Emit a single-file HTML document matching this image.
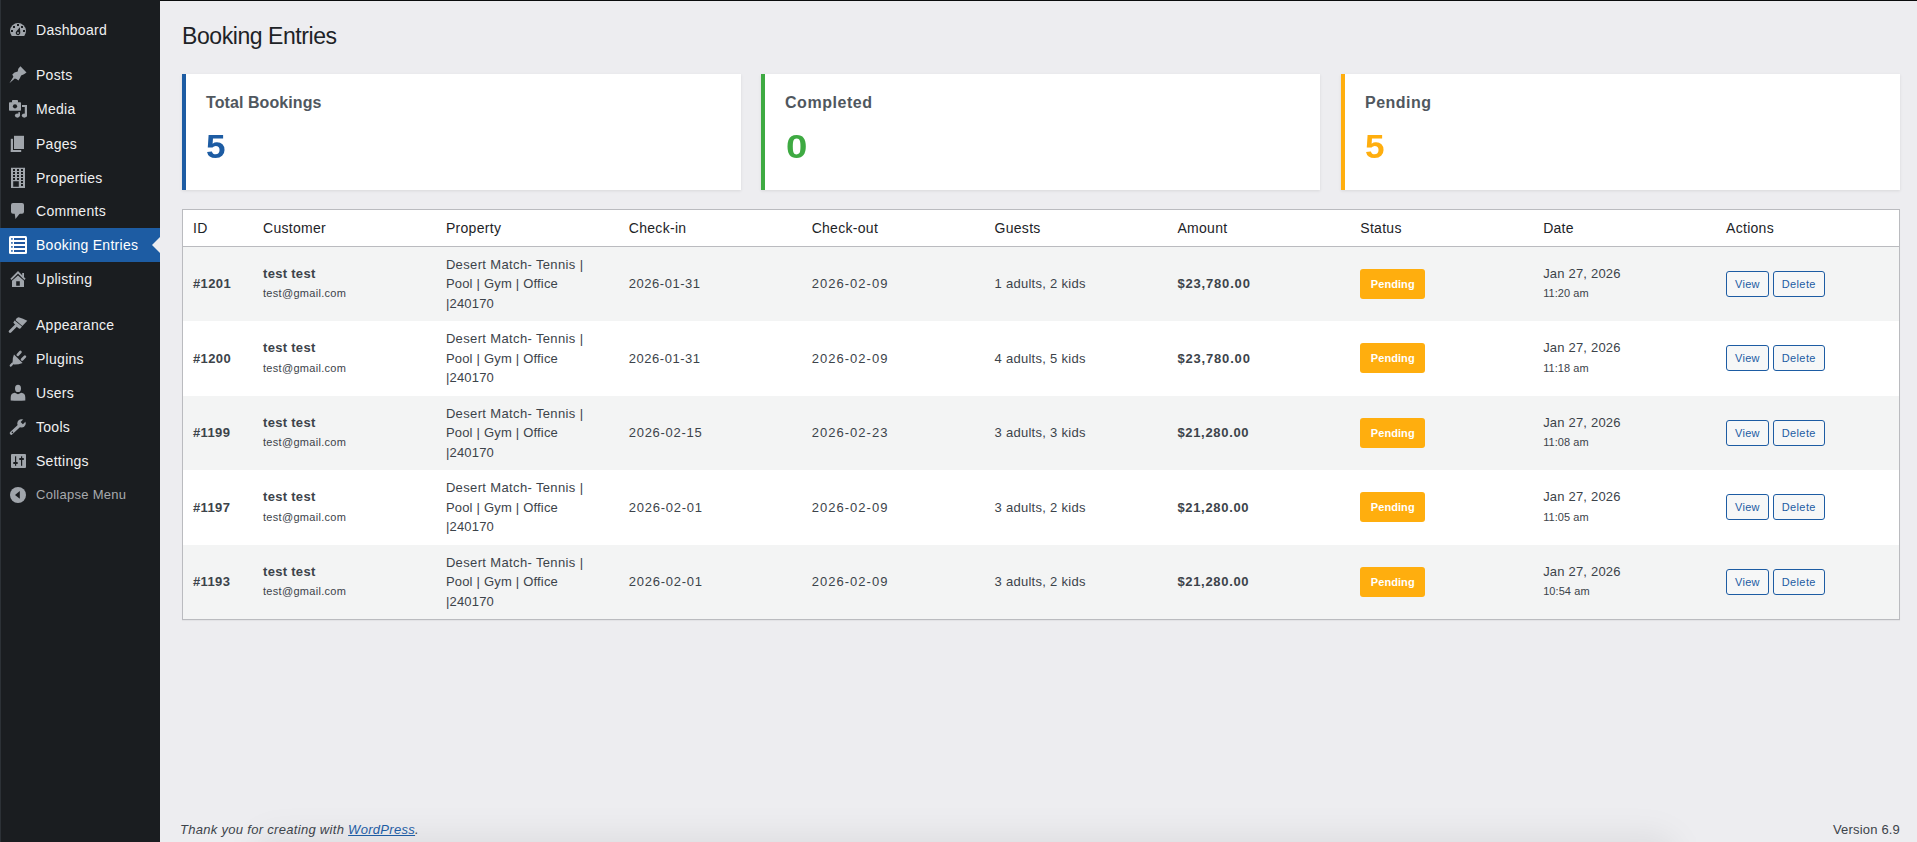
<!DOCTYPE html>
<html><head><meta charset="utf-8">
<style>
*{box-sizing:border-box}
html,body{margin:0;padding:0}
body{width:1917px;height:842px;overflow:hidden;background:#ededf0;font-family:"Liberation Sans",sans-serif;color:#3c434a;position:relative}
#side{position:absolute;left:0;top:0;width:160px;height:842px;background:#1a1d20;border-left:1px solid #2c3136}
#topline{position:absolute;left:160px;top:0;width:1757px;height:1px;background:#0a0c0d}
.mi{position:absolute;left:-1px;width:160px;height:34px;color:#f0f0f1;font-size:14px;line-height:34px}
.mi .t{position:absolute;left:36px;top:0;white-space:nowrap;letter-spacing:0.28px}
.mi svg{position:absolute;left:8px;top:7px;width:20px;height:20px;fill:#9ca2a7}
.mi.cur{background:#1d5ca3;color:#fff}
.mi.cur svg{fill:#fff}
.mi.cur:after{content:"";position:absolute;right:0;top:9px;border:8px solid transparent;border-right-color:#ededf0}
.mi.col{color:#a7aaad;font-size:13px}
h1{position:absolute;left:182px;top:0;margin:0;font-size:23px;font-weight:400;color:#1d2327;line-height:29px;letter-spacing:-0.43px}
.card{position:absolute;top:74px;height:116px;width:559px;background:#fff;border-left:4px solid #2271b1;box-shadow:0 1px 3px rgba(0,0,0,.09)}
.card .lbl{position:absolute;left:20px;top:0;font-size:16px;font-weight:700;color:#50575e;letter-spacing:0.08px}
.card .num{position:absolute;left:20px;top:0;font-size:34px;font-weight:700;transform-origin:0 0}
#tbl{position:absolute;left:182px;top:209px;width:1718px;border:1px solid #babbbf;background:#fff;box-shadow:0 1px 1px rgba(0,0,0,.04)}
table{border-collapse:collapse;width:100%;table-layout:fixed}
th{font-weight:400;text-align:left;font-size:14px;line-height:19.6px;padding:9px 10px 7px;color:#1d2327;border-bottom:1px solid #babbbf;height:36px;letter-spacing:0.3px}
td{font-size:13px;line-height:19.5px;padding:8px 10px;color:#3c434a;vertical-align:middle;height:74.5px;letter-spacing:0.2px}
tr.odd td{background:#f3f4f4}
.b{font-weight:700;letter-spacing:0.3px}
.sm{font-size:11px;letter-spacing:0.15px}
.badge{display:inline-block;background:#ffae0e;color:#fff;font-size:11px;font-weight:700;letter-spacing:0.08px;border-radius:3px;width:65px;height:30px;line-height:30px;text-align:center}
.btn{display:inline-block;height:26px;line-height:24px;padding:0 8px;font-size:11px;color:#1d5ca3;border:1px solid #1d5ca3;letter-spacing:0.3px;border-radius:3px;background:#f6f7f7;vertical-align:middle}
#foot{position:absolute;left:180px;top:820px;font-size:13px;font-style:italic;color:#3c434a;line-height:20px;letter-spacing:0.3px}
#foot a{color:#1d5ca3;text-decoration:underline}
#ver{position:absolute;right:17px;top:820px;font-size:13px;color:#3c434a;line-height:20px;letter-spacing:0.18px}
</style></head><body>
<div id="side">
  <div class="mi" style="top:13px"><span class="t">Dashboard</span></div>
  <div class="mi" style="top:58px"><span class="t">Posts</span></div>
  <div class="mi" style="top:92px"><span class="t">Media</span></div>
  <div class="mi" style="top:127px"><span class="t">Pages</span></div>
  <div class="mi" style="top:161px"><span class="t">Properties</span></div>
  <div class="mi" style="top:194px"><span class="t">Comments</span></div>
  <div class="mi cur" style="top:228px"><span class="t">Booking Entries</span></div>
  <div class="mi" style="top:262px"><span class="t">Uplisting</span></div>
  <div class="mi" style="top:308px"><span class="t">Appearance</span></div>
  <div class="mi" style="top:342px"><span class="t">Plugins</span></div>
  <div class="mi" style="top:376px"><span class="t">Users</span></div>
  <div class="mi" style="top:410px"><span class="t">Tools</span></div>
  <div class="mi" style="top:444px"><span class="t">Settings</span></div>
  <div class="mi col" style="top:478px"><span class="t">Collapse Menu</span></div>
</div>
<svg id="icons" width="160" height="842" viewBox="0 0 160 842" style="position:absolute;left:0;top:0">
<g fill="#a0a5ab">
<!-- dashboard -->
<path d="M11.76 36 A8 8 0 1 1 24.24 36 Z"/>
<g fill="#1a1d20"><rect x="17" y="24" width="2" height="2"/><rect x="13" y="26" width="2" height="2"/><rect x="21" y="26" width="2" height="2"/><rect x="11" y="30" width="2" height="2"/><rect x="23" y="30" width="2" height="2"/>
<path d="M19.9 27.2 L20.3 32.6 A2.3 2.3 0 1 1 16.2 31.4 Z"/></g>
<circle cx="18" cy="33" r="0.9" fill="#a0a5ab"/>
<!-- posts pin -->
<path d="M20.4 66.3 L26.5 72.5 L24 74.3 L21.1 75.4 L20 78 L18.5 80.5 L16.3 79.1 L14.8 78.5 L9.4 83.2 L13.4 76.8 L12.3 74.5 L14.5 72.5 L17.7 71.4 L18.3 68.8 Z"/>
<!-- media -->
<rect x="9" y="102.2" width="12" height="8.6" rx="0.8"/>
<rect x="12" y="100" width="6" height="3" rx="0.8"/>
<circle cx="15" cy="106.3" r="2.1" fill="#1a1d20"/>
<rect x="24.8" y="105" width="2.2" height="11.5"/>
<rect x="22" y="105" width="5" height="2"/>
<ellipse cx="24.3" cy="115.6" rx="2.5" ry="2.1"/>
<ellipse cx="17.4" cy="115.6" rx="2.5" ry="2.1"/>
<rect x="18.3" y="112.2" width="1.7" height="3.6"/>
<!-- pages -->
<rect x="14" y="135.8" width="10" height="13.2"/>
<rect x="10.8" y="138.8" width="2.2" height="13.2"/>
<rect x="10.8" y="150" width="10.4" height="2"/>
<!-- properties -->
<path fill-rule="evenodd" d="M11 167.8 H25 V188 H11 Z M13 169 h2 v2 h-2 Z M17 169 h2 v2 h-2 Z M21 169 h2 v2 h-2 Z M13 172 h2 v2 h-2 Z M17 172 h2 v2 h-2 Z M21 172 h2 v2 h-2 Z M13 175 h2 v2 h-2 Z M17 175 h2 v2 h-2 Z M21 175 h2 v2 h-2 Z M13 178 h2 v2 h-2 Z M17 178 h2 v2 h-2 Z M21 178 h2 v2 h-2 Z M21 181 h2 v2 h-2 Z M21 184 h2 v2 h-2 Z M13.2 181.2 h5.6 v5.6 h-5.6 Z"/>
<!-- comments -->
<rect x="11" y="203" width="13" height="10.8" rx="2"/>
<path d="M14.6 213 L15.5 219 L20.2 213 Z"/>
<!-- uplisting house -->
<path d="M11 279.3 L18 272.3 L25 279.3" fill="none" stroke="#a0a5ab" stroke-width="1.8"/>
<rect x="22.2" y="273" width="1.8" height="4.5"/>
<path fill-rule="evenodd" d="M12 280.8 L18 275.4 L24 280.8 V287 H12 Z M16.2 281.3 H19.8 V285.8 H16.2 Z"/>
<!-- appearance brush -->
<path d="M15.8 319.6 Q16.6 317.4 18.6 317.3 Q23 318.6 27.3 320.7 L22.4 326 L15.6 320.3 Z"/>
<path d="M14.6 320.6 L22 326.6 L20.4 328.6 L19.2 328.8 L17 327 L13.3 322.6 Z"/>
<path d="M15.6 326 L10.1 331.5" stroke="#a0a5ab" stroke-width="2.8" stroke-linecap="round"/>
<!-- plugins -->
<path d="M14 354.6 L22.6 363 Q18 364.8 14 364.6 L12.5 363.5 Q12.2 358 14 354.6 Z"/>
<path d="M12.6 363.6 L10.8 365.6" stroke="#a0a5ab" stroke-width="2.3" stroke-linecap="round"/>
<path d="M17.8 354.8 L20.4 352 M22.1 359.5 L24.9 356.6" stroke="#a0a5ab" stroke-width="2.7" stroke-linecap="round"/>
<!-- users -->
<ellipse cx="18" cy="388.4" rx="3" ry="3.6"/>
<path d="M10.7 400.4 V397.4 Q10.7 393.2 14.8 392.8 L18 394.2 L21.2 392.8 Q25.3 393.2 25.3 397.4 V400.4 Q18 401.2 10.7 400.4 Z"/>
<!-- tools -->
<path d="M11.3 433.2 L18.8 426.2" stroke="#a0a5ab" stroke-width="3.2" stroke-linecap="round"/>
<circle cx="21.5" cy="423.4" r="4.2"/>
<path d="M22.91 424.25 L20.65 421.99 L24.61 418.03 L26.87 420.29 Z" fill="#1a1d20"/>
<circle cx="12.4" cy="432.4" r="0.8" fill="#1a1d20"/>
<!-- settings -->
<rect x="11" y="454" width="15" height="14" rx="1"/>
<g fill="#1a1d20"><rect x="15" y="456.3" width="1.2" height="9.5"/><rect x="13.3" y="462" width="4.4" height="2"/><rect x="21" y="456.3" width="1.2" height="9.5"/><rect x="19.3" y="458" width="4.5" height="2"/></g>
<!-- collapse -->
<circle cx="18" cy="495" r="8"/>
<path d="M15 495 L19.8 491.1 V498.8 Z" fill="#1a1d20"/>
</g>
<!-- booking entries (active) -->
<rect x="9" y="236" width="18" height="18" rx="1.5" fill="#fff"/>
<g fill="#0a4696"><rect x="14" y="238.1" width="11" height="1.8"/><rect x="14" y="242.1" width="11" height="1.8"/><rect x="14" y="246.1" width="11" height="1.8"/><rect x="14" y="250.1" width="11" height="1.8"/></g>
<g fill="#4a7cb8"><rect x="11" y="238" width="1.8" height="1.8"/><rect x="11" y="242" width="1.8" height="1.8"/><rect x="11" y="246" width="1.8" height="1.8"/><rect x="11" y="250" width="1.8" height="1.8"/></g>
</svg>
<div id="topline"></div>
<h1 style="top:22px">Booking Entries</h1>
<div class="card" style="left:182px;border-left-color:#1d5ca3"><div class="lbl" style="top:20px">Total Bookings</div><div class="num" style="top:53px;color:#1d5ca3;transform:scaleX(1.03)">5</div></div>
<div class="card" style="left:761px;border-left-color:#3eaa42"><div class="lbl" style="top:20px;letter-spacing:0.55px">Completed</div><div class="num" style="top:53px;color:#3eaa42;left:21px;transform:scaleX(1.13)">0</div></div>
<div class="card" style="left:1341px;border-left-color:#ffae0e"><div class="lbl" style="top:20px;letter-spacing:0.5px">Pending</div><div class="num" style="top:53px;color:#ffae0e;transform:scaleX(1.03)">5</div></div>
<div id="tbl"><table>
<colgroup><col style="width:70px"><col><col><col><col><col><col><col><col><col></colgroup>
<thead><tr><th>ID</th><th>Customer</th><th>Property</th><th>Check-in</th><th>Check-out</th><th>Guests</th><th>Amount</th><th>Status</th><th>Date</th><th>Actions</th></tr></thead>
<tbody>
<tr class="odd"><td class="b" style="letter-spacing:0.38px">#1201</td><td><span class="b">test test</span><br><span class="sm" style="letter-spacing:0.3px">test@gmail.com</span></td><td><span style="letter-spacing:0.36px">Desert Match- Tennis |</span><br>Pool | Gym | Office<br>|240170</td><td style="letter-spacing:0.53px">2026-01-31</td><td style="letter-spacing:1.03px">2026-02-09</td><td style="letter-spacing:0.28px">1 adults, 2 kids</td><td class="b" style="letter-spacing:0.83px">$23,780.00</td><td><span class="badge">Pending</span></td><td>Jan 27, 2026<br><span class="sm" style="letter-spacing:0.08px">11:20 am</span></td><td><span class="btn">View</span> <span class="btn" style="letter-spacing:0.4px">Delete</span></td></tr>
<tr><td class="b" style="letter-spacing:0.38px">#1200</td><td><span class="b">test test</span><br><span class="sm" style="letter-spacing:0.3px">test@gmail.com</span></td><td><span style="letter-spacing:0.36px">Desert Match- Tennis |</span><br>Pool | Gym | Office<br>|240170</td><td style="letter-spacing:0.53px">2026-01-31</td><td style="letter-spacing:1.03px">2026-02-09</td><td style="letter-spacing:0.28px">4 adults, 5 kids</td><td class="b" style="letter-spacing:0.83px">$23,780.00</td><td><span class="badge">Pending</span></td><td>Jan 27, 2026<br><span class="sm" style="letter-spacing:0.08px">11:18 am</span></td><td><span class="btn">View</span> <span class="btn" style="letter-spacing:0.4px">Delete</span></td></tr>
<tr class="odd"><td class="b" style="letter-spacing:0.38px">#1199</td><td><span class="b">test test</span><br><span class="sm" style="letter-spacing:0.3px">test@gmail.com</span></td><td><span style="letter-spacing:0.36px">Desert Match- Tennis |</span><br>Pool | Gym | Office<br>|240170</td><td style="letter-spacing:0.72px">2026-02-15</td><td style="letter-spacing:1.03px">2026-02-23</td><td style="letter-spacing:0.28px">3 adults, 3 kids</td><td class="b" style="letter-spacing:0.68px">$21,280.00</td><td><span class="badge">Pending</span></td><td>Jan 27, 2026<br><span class="sm" style="letter-spacing:0.08px">11:08 am</span></td><td><span class="btn">View</span> <span class="btn" style="letter-spacing:0.4px">Delete</span></td></tr>
<tr><td class="b" style="letter-spacing:0.38px">#1197</td><td><span class="b">test test</span><br><span class="sm" style="letter-spacing:0.3px">test@gmail.com</span></td><td><span style="letter-spacing:0.36px">Desert Match- Tennis |</span><br>Pool | Gym | Office<br>|240170</td><td style="letter-spacing:0.75px">2026-02-01</td><td style="letter-spacing:1.03px">2026-02-09</td><td style="letter-spacing:0.28px">3 adults, 2 kids</td><td class="b" style="letter-spacing:0.68px">$21,280.00</td><td><span class="badge">Pending</span></td><td>Jan 27, 2026<br><span class="sm" style="letter-spacing:0.08px">11:05 am</span></td><td><span class="btn">View</span> <span class="btn" style="letter-spacing:0.4px">Delete</span></td></tr>
<tr class="odd"><td class="b" style="letter-spacing:0.38px">#1193</td><td><span class="b">test test</span><br><span class="sm" style="letter-spacing:0.3px">test@gmail.com</span></td><td><span style="letter-spacing:0.36px">Desert Match- Tennis |</span><br>Pool | Gym | Office<br>|240170</td><td style="letter-spacing:0.75px">2026-02-01</td><td style="letter-spacing:1.03px">2026-02-09</td><td style="letter-spacing:0.28px">3 adults, 2 kids</td><td class="b" style="letter-spacing:0.68px">$21,280.00</td><td><span class="badge">Pending</span></td><td>Jan 27, 2026<br><span class="sm" style="letter-spacing:0.08px">10:54 am</span></td><td><span class="btn">View</span> <span class="btn" style="letter-spacing:0.4px">Delete</span></td></tr>
</tbody></table></div>
<div id="dockshadow" style="position:absolute;left:250px;top:832px;width:1430px;height:60px;border-radius:40px;background:rgba(0,0,0,0.055);filter:blur(14px)"></div>
<div id="foot">Thank you for creating with <a>WordPress</a>.</div>
<div id="ver">Version 6.9</div>
</body></html>
